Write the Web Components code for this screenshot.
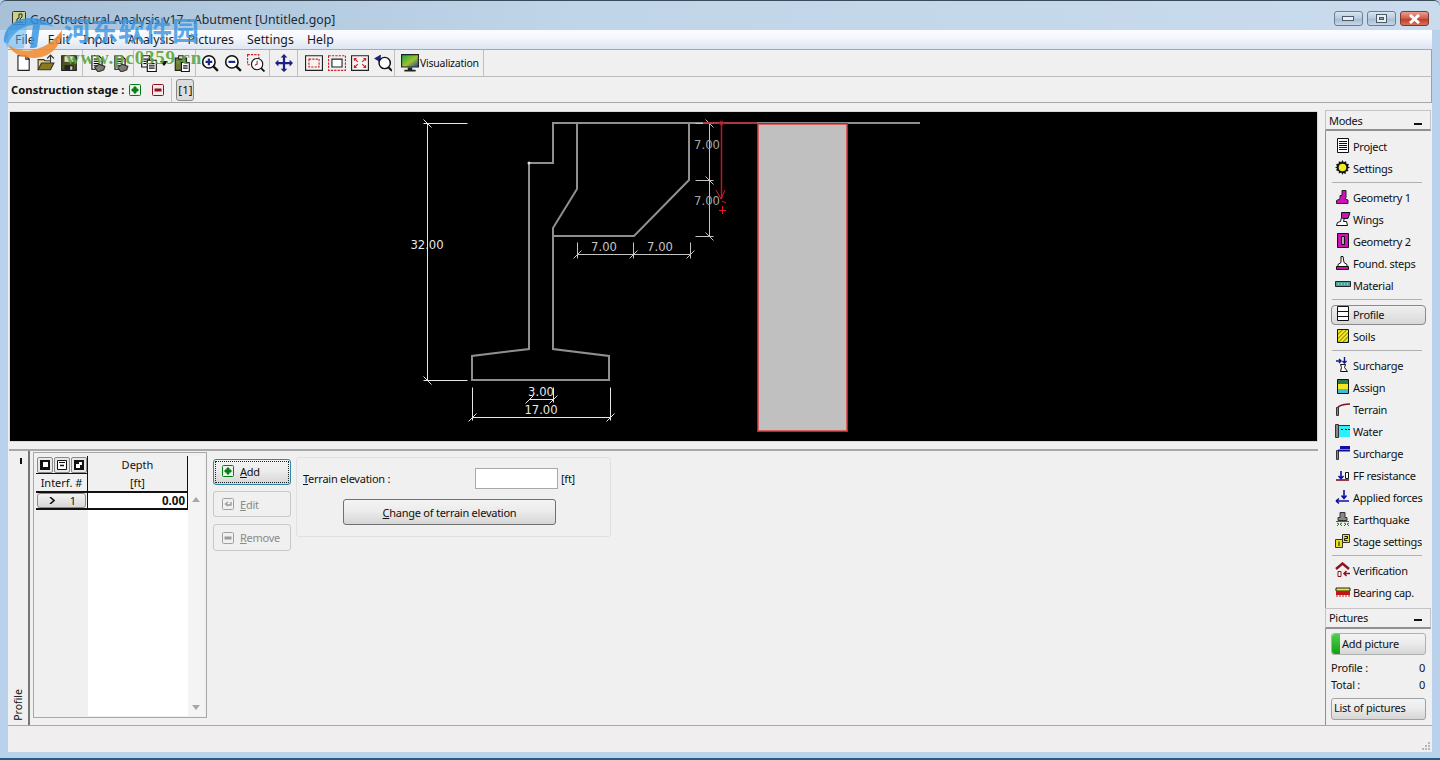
<!DOCTYPE html>
<html>
<head>
<meta charset="utf-8">
<title>GeoStructural Analysis v17 - Abutment</title>
<style>
html,body{margin:0;padding:0;height:760px;overflow:hidden;background:#b9d1ea;}
</style>
</head>
<body>
<geo-app></geo-app>
<script>
const FONT = '"Noto Sans","DejaVu Sans",sans-serif';

const doc = (x, y) => `<path d="M${x}.5 ${y}.5h6l3 3v9h-9z" fill="#fff" stroke="#000"/>`;
const lines = (x, y, n) => Array.from({length:n}, (_, i) => `<path d="M${x} ${y + i * 2}.5h5" stroke="#000" stroke-width="1"/>`).join('');

const ICONS = {
    // toolbar
    newfile:`<path d="M3.5 1.5h7l3 3v10h-10z" fill="#fff" stroke="#222"/><path d="M10.5 1.5v3h3" fill="none" stroke="#222"/>`,
    open:`<path d="M1 14V5h5l1 1h5v2" fill="#e5d47a" stroke="#333"/><path d="M1 14l3-6h11l-3 6z" fill="#8a7a1e" stroke="#333"/><path d="M9 4l3-3 3 3M12 1v5" fill="none" stroke="#333"/>`,
    save:`<path d="M1.5 1.5h13v13h-13z" fill="#4c5420" stroke="#222"/><path d="M4 2h8v5H4z" fill="#d9dcc5"/><path d="M4 10h8v4H4z" fill="#222"/><path d="M9 11h2v3H9z" fill="#ccc"/>`,
    docgear:`${doc(3,1)}${lines(5,4,4)}<path d="M6 12l4-3 5 2-1 3-5 2z" fill="#7a7f72" stroke="#333"/>`,
    copy:`<path d="M1.5 1.5h7v10h-7z" fill="#fff" stroke="#111"/>${lines(3,4,3)}<path d="M6.5 5.5h8v10h-8z" fill="#fff" stroke="#111"/><path d="M8 8.5h5M8 10.500h5M8 12.500h5" stroke="#111"/>`,
    paste:`<path d="M2 3.5h10v11H2z" fill="#6f7a32" stroke="#222"/><path d="M5 1.5h4v3H5z" fill="#ddd" stroke="#222"/><path d="M7.5 7.5h7v8h-7z" fill="#fff" stroke="#113"/><path d="M9 10.500h4M9 12.500h4" stroke="#113"/>`,
    zoomin:`<circle cx="7" cy="7" r="5.5" fill="#fff" stroke="#111" stroke-width="1.4"/><path d="M4 7h6M7 4v6" stroke="#1a2a8a" stroke-width="2"/><path d="M11 11l4 4" stroke="#111" stroke-width="2"/>`,
    zoomout:`<circle cx="7" cy="7" r="5.5" fill="#fff" stroke="#111" stroke-width="1.4"/><path d="M4 7h6" stroke="#1a2a8a" stroke-width="2"/><path d="M11 11l4 4" stroke="#111" stroke-width="2"/>`,
    zoomwin:`<path d="M.5 .5h10v9H.5z" fill="none" stroke="#c22" stroke-dasharray="2 1"/><circle cx="9" cy="9" r="5" fill="#fff" stroke="#111"/><path d="M9 6v3l-2 1" fill="none" stroke="#a33"/><path d="M12.5 12.5l3 3" stroke="#111" stroke-width="1.6"/>`,
    move:`<path d="M8 0l3 3H9v4h4V5l3 3-3 3V9H9v4h2l-3 3-3-3h2V9H3v2L0 8l3-3v2h4V3H5z" fill="#1c1f85"/>`,
    rectin:`<path d="M.5 1.5h15v13H.5z" fill="#f4f4f4" stroke="#222"/><path d="M3.5 4.5h9v7h-9z" fill="none" stroke="#c22" stroke-dasharray="2 1"/>`,
    rectout:`<path d="M.5 1.5h15v13H.5z" fill="none" stroke="#c22" stroke-dasharray="2 1"/><path d="M3.5 4.5h9v7h-9z" fill="#fff" stroke="#222"/>`,
    rectfit:`<path d="M.5 1.5h15v13H.5z" fill="#f4f4f4" stroke="#222"/><path d="M3 6V4h2M13 6V4h-2M3 10v2h2M13 10v2h-2M3 4l3 3M13 4l-3 3M3 12l3-3M13 12l-3-3" fill="none" stroke="#c22"/>`,
    zoomback:`<path d="M6 1L1 4l5 3V5" fill="#1c1f85" stroke="#1c1f85"/><circle cx="9.5" cy="8" r="5" fill="#fff" stroke="#111" stroke-width="1.3"/><path d="M13 12l3 3" stroke="#111" stroke-width="1.8"/>`,
    monitor:`<defs><linearGradient id="vg" x1="0" y1="0" x2="1" y2="1"><stop offset="0" stop-color="#12a24a"/><stop offset=".55" stop-color="#9ec22a"/><stop offset="1" stop-color="#1d3fb0"/></linearGradient></defs><path d="M.5 .5h15v11H.5z" fill="url(#vg)" stroke="#222"/><path d="M6 12h4v2H6zM3 14h10v1.500H3z" fill="#222"/>`,
    // stage bar
    plus:`<path d="M1.500 2.500q0-1 1-1h9q1 0 1 1v9q0 1-1 1h-9q-1 0-1-1z" fill="#e9f4e9" stroke="#0a7a16"/><path d="M4 6h2V4h2v2h2v2H8v2H6V8H4z" fill="#0a7a16" stroke="#0a7a16"/>`,
    minus:`<path d="M1.500 2.500q0-1 1-1h9q1 0 1 1v9q0 1-1 1h-9q-1 0-1-1z" fill="#f6e9e9" stroke="#8c1220"/><path d="M3.500 5.500h7v3h-7z" fill="#8c1220"/>`,
    // modes
    project:`<path d="M2.500 .500h11v14h-11z" fill="#fff" stroke="#111"/><path d="M4 3.500h8M4 5.500h8M4 7.500h8M4 9.500h8M4 11.500h8" stroke="#111"/>`,
    settings:`<path d="M7.500 0l1.200 2.200 2.400-.9.3 2.500 2.500.3-.9 2.400L15 7.500l-2.500 1.200.9 2.400-2.500.3-.3 2.500-2.400-.9L7.500 15l-1.200-2.500-2.400.9-.3-2.500-2.500-.3.9-2.400L0 7.500l2-1-.9-2.400 2.500-.3.3-2.500 2.400.9z" fill="#111"/><circle cx="7.500" cy="7.500" r="3.800" fill="#eeee22"/>`,
    geom1:`<path d="M1.500 14.500v-3l3.500-1.500V6.500h2V1.500h4v7l-1 1.500 3 1v3.500z" fill="#d010b8" stroke="#222"/>`,
    wings:`<path d="M1.500 14.500l1-3 3-1 1-4h3l-1 4h3l1 4z" fill="#fff" stroke="#111"/><path d="M6.500 1.500h8.500l-2 6H8l-1.500-1z" fill="#d010b8" stroke="#111"/>`,
    geom2:`<path d="M2.500 .500h11v14h-11z" fill="#d010b8" stroke="#111"/><path d="M6.500 3.500h3v8h-3z" fill="#aaa" stroke="#111"/>`,
    steps:`<path d="M6 1.500h2l1 6 3 2v2H3v-2l3-2z" fill="#fff" stroke="#111"/><path d="M1.500 11.500h12v3h-12z" fill="#d010b8" stroke="#111"/>`,
    material:`<path d="M.5 4.500h15v5H.5z" fill="#4aa7a0" stroke="#222"/><path d="M3 7h1M6 7h1M9 7h1M12 7h1" stroke="#d8f0ee"/>`,
    profile:`<path d="M2.500 .500h11v14h-11z" fill="#fff" stroke="#111"/><path d="M2.500 5.500h11M2.500 10.500h11" stroke="#111"/>`,
    soils:`<defs><pattern id="sp" width="3" height="3" patternUnits="userSpaceOnUse" patternTransform="rotate(45)"><rect width="3" height="3" fill="#f2e820"/><rect width="1" height="3" fill="#8a8a10"/></pattern></defs><path d="M2.500 1.500h11v13h-11z" fill="url(#sp)" stroke="#111"/>`,
    surcharge:`<path d="M5.500 7.500h5l-1 3 3 4h-7l1-4z" fill="#fff" stroke="#111"/><path d="M1 4h5M4 2l2 2-2 2M9.500 0v6M7.500 4l2 2 2-2" fill="none" stroke="#11188a" stroke-width="1.400"/>`,
    assign:`<path d="M2.500 .500h11v14h-11z" fill="#2a7a4a" stroke="#111"/><path d="M3 5h10v5H3z" fill="#f2e820"/><path d="M3 10h10v4H3z" fill="#3ac0d0"/>`,
    terrain:`<path d="M1.500 14.500v-8h2v8z" fill="#888" stroke="#333"/><path d="M3 6c3-2 5-3 12-3" fill="none" stroke="#7a1020" stroke-width="1.600"/>`,
    water:`<path d="M.5 1.500h3v13h-3z" fill="#888" stroke="#333"/><path d="M4 3h11v11H4z" fill="#2af0ff"/><path d="M4 2.500h11" stroke="#333"/><path d="M6 6.500h2M10 6.500h2M13 6.500h2" stroke="#111"/>`,
    surcharge2:`<path d="M1.500 14.500v-9h2v9z" fill="#888" stroke="#333"/><path d="M3 5.500h12" stroke="#1010a0" stroke-width="2"/><path d="M5 1h10v3H5z" fill="#1010a0"/>`,
    ff:`<path d="M1 13h13" stroke="#7a1020" stroke-width="1.600"/><path d="M10.500 5.500h3v6h-3z" fill="#fff" stroke="#111"/><path d="M6 4v7M3.500 9l2.500 2.500L8.500 9" fill="none" stroke="#1010a0" stroke-width="1.600"/>`,
    forces:`<path d="M9 1v8M6.500 6.500L9 9.500l2.500-3" fill="none" stroke="#1010a0" stroke-width="1.600"/><path d="M1 12h13M1 12l3-2.500M1 12l3 2.500" fill="none" stroke="#1010a0" stroke-width="1.600"/>`,
    quake:`<path d="M5 1.500h5v5h2v3H3v-3h2z" fill="#888" stroke="#333"/><path d="M1 10.500h13" stroke="#2a7a2a"/><path d="M2 12l2 1-2 2M7 12l-2 1 2 2M9 12l2 1-2 2M14 12l-2 1 2 2" fill="none" stroke="#2a7a2a"/>`,
    stage:`<path d="M.5 6.500h7v8h-7z" fill="#ece028" stroke="#333"/><path d="M7.500 1.500h7v8h-7z" fill="#ece028" stroke="#333"/><path d="M4 8.500v4.500M9.500 3.500h3v2h-3v2h3" fill="none" stroke="#111"/>`,
    verify:`<path d="M1 7l6.500-5.500L14 7" fill="none" stroke="#8c1220" stroke-width="2.400"/><path d="M3 9.500h3v5H3z" fill="#fff" stroke="#8c1220"/><path d="M15 11.500H9M11.500 9L9 11.500l2.500 2.500" fill="none" stroke="#8c1220" stroke-width="1.500"/>`,
    bearing:`<path d="M1 4h14v3H1z" fill="#f2e820" stroke="#222"/><path d="M1 7h14v4H1z" fill="#c01818"/><path d="M2 11v2M5 11v2M8 11v2M11 11v2M14 11v2" stroke="#c01818"/>`,
    // table
    tblsel:`<path d="M1 1h10v10H1z" fill="#111"/><path d="M4 3h5v5H4z" fill="#fff"/>`,
    tblmin:`<path d="M1.500 1.500h9v9h-9z" fill="#fff" stroke="#111"/><path d="M4 6.500h4" stroke="#111" stroke-width="1.500"/><path d="M3 3.500h6" stroke="#111"/>`,
    tblcopy:`<path d="M1 1h10v10H1z" fill="#111"/><path d="M3 5h4v4H3zM6 3h3v3H6z" fill="#fff"/>`,
    edit:`<path d="M1.500 2.500q0-1 1-1h9q1 0 1 1v9q0 1-1 1h-9q-1 0-1-1z" fill="#f0f0f0" stroke="#a0a0a0"/><path d="M10 5v3H6M7 5L4.500 7 7 9" fill="none" stroke="#9a9a9a" stroke-width="1.400"/>`,
    removeoff:`<path d="M1.500 2.500q0-1 1-1h9q1 0 1 1v9q0 1-1 1h-9q-1 0-1-1z" fill="#f0f0f0" stroke="#a0a0a0"/><path d="M3.500 5.500h7v3h-7z" fill="#9a9a9a"/>`
};

function svgIcon(name, w, h, vb){
    return `<svg xmlns="http://www.w3.org/2000/svg" width="${w}" height="${h}" viewBox="0 0 ${vb} ${vb}">${ICONS[name] || ''}</svg>`;
}

class GeoBase extends HTMLElement{
    constructor(){
        super();
        this.attachShadow({mode:'open'});
    }
    connectedCallback(){
        this.render();
    }
    getMarkup(){ return '<slot></slot>'; }
    getStyles(){ return ''; }
    render(){
        const template = document.createElement('template');
        template.innerHTML = `<style>${this.getStyles()}</style>${this.getMarkup()}`;
        this.shadowRoot.appendChild(template.content.cloneNode(true));
    }
}

class GeoWatermark extends GeoBase{
    getStyles(){ return `
        :host{position:absolute;left:0;top:0;width:220px;height:80px;pointer-events:none;z-index:5;}
        svg{position:absolute;left:0;top:0;}
        .cn{position:absolute;left:64px;top:10px;font:bold 27px "Noto Sans CJK SC",sans-serif;color:rgba(58,150,225,.82);white-space:nowrap;}
        .url{position:absolute;left:66px;top:47px;font:bold 19px "Liberation Serif",serif;color:rgba(90,165,60,.92);letter-spacing:.8px;white-space:nowrap;}
    `; }
    getMarkup(){ return `
        <svg width="70" height="80" viewBox="0 0 70 80">
            <path d="M4 42C3 28 15 18 30 18c10 0 18 3 24 9-4-2-10-2-14-2l-3 22c-2 1-4 1-7 1l3-23C23 26 13 32 8 44z" fill="rgba(58,150,225,.85)"/>
            <path d="M5 42c4-8 12-14 22-15l-3 21c-6 1-13 1-17-1z" fill="rgba(95,180,240,.55)"/>
            <path d="M8 44C16 52 30 52 40 48 50 44 56 38 62 30 62 44 52 58 34 58 22 58 12 54 8 44z" fill="rgba(240,140,50,.88)"/>
        </svg>
        <div class="cn">河东软件园</div>
        <div class="url">www.pc0359.cn</div>
    `; }
}

class GeoTitlebar extends GeoBase{
    getStyles(){ return `
        :host{display:flex;align-items:flex-start;height:30px;box-sizing:border-box;flex:none;padding:10px 11px 0 12px;
            background:linear-gradient(90deg,#a8c1d8,#c1d5e8 40%,#c9dbec);
            border-top:1px solid #3a4a58;border-radius:6px 6px 0 0;}
        .ico{width:14px;height:14px;margin-right:4px;flex:none;}
        .title{font:12.300px/17px ${FONT};color:#1b2a38;flex:1;white-space:nowrap;}
        .ctl{display:flex;gap:4px;}
        .b{width:29px;height:15px;box-sizing:border-box;border:1px solid #6b7f92;border-radius:3px;display:flex;align-items:center;justify-content:center;
            background:linear-gradient(#d9e5f0,#b6c9db 50%,#a3b9cd 51%,#c6d8e8);}
        .b.x{background:linear-gradient(#e8a090,#d15a45 50%,#b83a28 51%,#d87058);border-color:#7a3a30;}
    `; }
    getMarkup(){ return `
        <svg class="ico" viewBox="0 0 14 14"><rect x=".5" y=".5" width="13" height="13" rx="1" fill="#c9d08c" stroke="#333"/><path d="M3 11.500h8M5 11V8l2-1V3h3v3l-2 2v3" fill="none" stroke="#222"/></svg>
        <div class="title"><slot></slot></div>
        <div class="ctl">
            <div class="b"><svg width="14" height="7" viewBox="0 0 14 7"><rect x=".5" y="1.500" width="11" height="4" fill="#e8eef4" stroke="#4a5a68"/></svg></div>
            <div class="b"><svg width="12" height="10" viewBox="0 0 12 10"><rect x=".5" y=".5" width="10" height="8" fill="#e8eef4" stroke="#4a5a68"/><rect x="3.500" y="3.500" width="4" height="2" fill="#8aa" stroke="#4a5a68"/></svg></div>
            <div class="b x"><svg width="13" height="10" viewBox="0 0 13 10"><path d="M2 1l9 8M11 1L2 9" stroke="#fff" stroke-width="3"/></svg></div>
        </div>
    `; }
}

class GeoMenubar extends GeoBase{
    getStyles(){ return `
        :host{display:flex;height:20px;flex:none;box-sizing:border-box;padding-left:7px;
            background:linear-gradient(#fbfcfe,#f4f7fc 40%,#dde5f3);
            font:12.300px/19px ${FONT};color:#1a1a1a;border-bottom:1px solid #a8a8a8;}
        ::slotted(span){margin-right:13.200px;}
    `; }
}

class GeoToolBtn extends GeoBase{
    getStyles(){ return `
        :host{display:flex;width:23px;height:24px;align-items:center;justify-content:center;flex:none;}
    `; }
    getMarkup(){ return svgIcon(this.getAttribute('icon'), 18, 18, 16); }
}

class GeoToolbar extends GeoBase{
    getStyles(){ return `
        :host{display:flex;height:27px;flex:none;box-sizing:border-box;align-items:center;padding-left:3px;
            background:#f0f0f0;border-bottom:1px solid #bdbdbd;border-right:1px solid #a0a0a0;
            font:10.500px ${FONT};color:#111;}
        ::slotted(i){display:block;width:1px;height:26px;background:#c0c0c0;margin:0 2px;flex:none;}
        ::slotted(b){font:normal 10.500px ${FONT};letter-spacing:-.25px;}
    `; }
}

class GeoStagebar extends GeoBase{
    getStyles(){ return `
        :host{display:flex;height:26px;flex:none;box-sizing:border-box;align-items:center;padding:0 0 0 3px;
            background:#f0f0f0;border-bottom:1px solid #a8a8a8;border-right:1px solid #a0a0a0;
            font:bold 11.300px ${FONT};color:#111;}
        svg{flex:none;display:block;}
        .i1{margin-left:4px;}
        .i2{margin-left:9px;}
        .sep{width:1px;height:24px;background:#c4c4c4;margin:0 4px 0 6px;}
        .tab{width:18px;height:22px;box-sizing:border-box;border:1px solid #8a8a8a;border-radius:3px;background:#dcdcdc;display:flex;align-items:center;justify-content:center;font:11.500px ${FONT};}
    `; }
    getMarkup(){ return `
        <span><slot></slot></span>
        <span class="i1">${svgIcon('plus',14,14,14)}</span>
        <span class="i2">${svgIcon('minus',14,14,14)}</span>
        <div class="sep"></div>
        <div class="tab">[1]</div>
    `; }
}

class GeoCanvas extends GeoBase{
    getStyles(){ return `
        :host{display:block;height:331px;box-sizing:border-box;flex:none;background:#000;border:1px solid #d8d8d8;}
        svg{display:block;}
        text{font:11.600px "DejaVu Sans",sans-serif;text-anchor:middle;}
    `; }
    dim(x1, y1, x2, y2){
        return `<path d="M${x1}.5 ${y1}.5L${x2}.5 ${y2}.5"/>`;
    }
    // vertical dimension lines are ticked with a backslash, horizontal ones with a slash
    tickV(x, y){
        return `<path d="M${x - 4}.5 ${y - 4}.5L${x + 4}.5 ${y + 4}.5"/>`;
    }
    tickH(x, y){
        return `<path d="M${x - 4}.5 ${y + 4}.5L${x + 4}.5 ${y - 4}.5"/>`;
    }
    getMarkup(){
        const white = [
            this.dim(427,123,427,380), this.dim(423,123,467,123), this.dim(423,380,467,380),
            this.tickV(427,123), this.tickV(427,380),
            this.dim(472,387,472,420), this.dim(610,387,610,420), this.dim(472,417,610,417),
            this.tickH(472,417), this.tickH(610,417),
            this.dim(529,399,553,399), this.dim(553,387,553,402), this.tickH(529,399), this.tickH(553,399)
        ].join('');
        const light = [
            this.dim(709,123,709,236), this.dim(695,180,713,180), this.dim(695,236,713,236), this.dim(695,123,713,123),
            this.tickV(709,123), this.tickV(709,180), this.tickV(709,236),
            this.dim(577,254,690,254), this.dim(577,242,577,258), this.dim(633,242,633,258), this.dim(690,242,690,258),
            this.tickH(577,254), this.tickH(633,254), this.tickH(690,254)
        ].join('');
        return `
        <svg width="1308" height="329" viewBox="10 112 1308 329">
            <g fill="none" stroke="#8f8f8f" stroke-width="2">
                <path d="M529 163H553V123H920"/>
                <path d="M529 163V349L472 356V380H609V356L553 349V228L577 189V123"/>
                <path d="M553 236H634L689 180V123"/>
            </g>
            <circle cx="529" cy="163" r="1.500" fill="#ddd"/>
            <g stroke="#e6e6e6" stroke-width="1" fill="none">${white}</g>
            <g stroke="#c4c4c4" stroke-width="1" fill="none">${light}</g>
            <rect x="757" y="123" width="91" height="309" fill="#cc1a28"/>
            <rect x="758" y="124" width="89" height="307" fill="#d86060"/>
            <rect x="759" y="125" width="87" height="305" fill="#c0c0c0"/>
            <g fill="none" stroke="#b8182a">
                <path d="M703 123H757" stroke-width="1.500"/>
                <path d="M721.500 123V199" stroke-width="1.500"/>
                <circle cx="721.500" cy="123" r="2"/>
                <path d="M716 190L721 199L725 190M722 201L726 203M719 210.500H726M722.500 206V214" stroke="#e01828"/>
            </g>
            <g fill="#e8e8e8">
                <text x="427" y="249">32.00</text>
                <text x="541" y="396">3.00</text>
                <text x="541" y="414">17.00</text>
            </g>
            <g fill="#a8a8a8">
                <text x="707" y="149">7.00</text>
                <text x="707" y="205">7.00</text>
            </g>
            <g fill="#c8c8c8">
                <text x="604" y="251">7.00</text>
                <text x="660" y="251">7.00</text>
            </g>
        </svg>`;
    }
}

class GeoButton extends GeoBase{
    getStyles(){ return `
        :host{display:flex;align-items:center;box-sizing:border-box;flex:none;border:1px solid #a0a0a0;border-radius:3px;
            font:11px ${FONT};letter-spacing:-.25px;color:#111;white-space:nowrap;
            background:linear-gradient(#f4f4f4,#ececec 45%,#d6d6d6);}
        :host([primary]){border:1px solid #2c8aa8;outline:1px dotted #222;outline-offset:-3px;padding-bottom:2px;}
        :host([off]){background:#f0f0f0;color:#8a8a8a;border-color:#c8c8c8;}
        :host([center]){justify-content:center;}
        .ic{display:flex;margin:0 5px 0 7px;}
    `; }
    getMarkup(){
        const icon = this.getAttribute('icon');
        return (icon ? `<span class="ic">${svgIcon(icon,14,14,14)}</span>` : '') + '<slot></slot>';
    }
}

class GeoProfileTable extends GeoBase{
    getStyles(){ return `
        :host{display:flex;box-sizing:border-box;width:174px;height:266px;flex:none;border:1px solid #a8a8a8;padding:3px 2px 1px 2px;background:#f0f0f0;
            font:11px ${FONT};color:#111;}
        .col{display:flex;flex-direction:column;}
        .c1{width:52px;flex:none;box-sizing:border-box;}
        .c2{width:100px;flex:none;box-sizing:border-box;background:#fff;}
        .scroll{flex:1;background:#f4f4f4;display:flex;flex-direction:column;justify-content:space-between;align-items:center;padding:41px 0 6px;}
        .tools{height:18px;display:flex;align-items:center;gap:1px;padding-left:1px;border-bottom:1px solid #111;box-sizing:border-box;border-right:1px solid #111;background:#f0f0f0;}
        .tool{width:16px;height:16px;box-sizing:border-box;border:1px solid #8a8a8a;border-radius:2px;display:flex;align-items:center;justify-content:center;background:#e8e8e8;}
        .h2{height:19px;line-height:18px;text-align:center;border-bottom:2px solid #111;border-right:1px solid #111;background:#f0f0f0;box-sizing:border-box;}
        .h1{height:18px;line-height:18px;text-align:center;border-right:1px solid #111;background:#f0f0f0;box-sizing:border-box;}
        .rowh{height:17px;border-bottom:2px solid #111;border-right:1px solid #111;box-sizing:border-box;padding:0 1px;background:#f0f0f0;}
        .rowb{height:15px;box-sizing:border-box;border:1px solid #8a8a8a;border-radius:3px;background:linear-gradient(#f2f2f2,#d8d8d8);display:flex;align-items:center;justify-content:space-between;padding:0 9px 0 11px;}
        .val{height:17px;border-bottom:2px solid #111;border-right:1px solid #111;box-sizing:border-box;text-align:right;padding-right:2px;font:bold 11.500px/15px ${FONT};}
        .up{width:0;height:0;border:4px solid transparent;border-top:0;border-bottom:5px solid #a8a8a8;}
        .dn{width:0;height:0;border:4px solid transparent;border-bottom:0;border-top:5px solid #a8a8a8;}
    `; }
    getMarkup(){ return `
        <div class="col c1">
            <div class="tools">
                <span class="tool">${svgIcon('tblsel',12,12,12)}</span>
                <span class="tool">${svgIcon('tblmin',12,12,12)}</span>
                <span class="tool">${svgIcon('tblcopy',12,12,12)}</span>
            </div>
            <div class="h2">Interf. #</div>
            <div class="rowh"><div class="rowb"><svg width="6" height="7" viewBox="0 0 6 7"><path d="M1 0l4 3.500L1 7" fill="none" stroke="#111" stroke-width="1.600"/></svg><span>1</span></div></div>
        </div>
        <div class="col c2">
            <div class="h1">Depth</div>
            <div class="h2">[ft]</div>
            <div class="val">0.00</div>
        </div>
        <div class="scroll"><div class="up"></div><div class="dn"></div></div>
    `; }
}

class GeoTerrainBox extends GeoBase{
    getStyles(){ return `
        :host{display:block;box-sizing:border-box;width:315px;height:80px;flex:none;border:1px solid #e0e0e0;border-radius:3px;
            font:11px ${FONT};letter-spacing:-.25px;color:#111;padding:10px 6px 0 6px;}
        .row{display:flex;align-items:center;height:21px;}
        .lbl{width:172px;flex:none;}
        .in{width:83px;height:21px;box-sizing:border-box;background:#fff;border:1px solid #a8a8a8;flex:none;}
        .unit{margin-left:3px;}
        .btn{margin:10px 0 0 40px;}
        geo-button{width:213px;height:26px;border-color:#707070;}
    `; }
    getMarkup(){ return `
        <div class="row"><span class="lbl"><u>T</u>errain elevation :</span><span class="in"></span><span class="unit">[ft]</span></div>
        <div class="btn"><geo-button center><span><u>C</u>hange of terrain elevation</span></geo-button></div>
    `; }
}

class GeoInputPanel extends GeoBase{
    getStyles(){ return `
        :host{display:flex;height:276px;flex:none;box-sizing:border-box;border-top:2px solid #a8a8a8;}
        .tab{width:21px;flex:none;box-sizing:border-box;border-right:2px solid #777;display:flex;flex-direction:column;justify-content:space-between;align-items:center;}
        .pin{width:2px;height:6px;background:#111;margin:7px 0 0 5px;}
        .v{writing-mode:vertical-rl;transform:rotate(180deg);font:10.500px ${FONT};color:#111;margin:0 2px 4px 0;line-height:14px;}
        .body{display:flex;padding:1px 0 0 3px;}
        .btns{display:flex;flex-direction:column;gap:6px;margin:7px 0 0 6px;width:78px;}
        geo-button{width:78px;height:26px;}
        geo-terrain-box{margin:5px 0 0 5px;}
    `; }
    getMarkup(){ return `
        <div class="tab"><div class="pin"></div><div class="v">Profile</div></div>
        <div class="body">
            <geo-profile-table></geo-profile-table>
            <div class="btns">
                <geo-button primary icon="plus"><span><u>A</u>dd</span></geo-button>
                <geo-button off icon="edit"><span><u>E</u>dit</span></geo-button>
                <geo-button off icon="removeoff" style="height:27px;margin-top:1px"><span><u>R</u>emove</span></geo-button>
            </div>
            <geo-terrain-box></geo-terrain-box>
        </div>
    `; }
}

class GeoModeItem extends GeoBase{
    getStyles(){ return `
        :host{display:flex;align-items:center;height:22px;box-sizing:border-box;margin:0 5px;padding-left:4px;font:11px ${FONT};letter-spacing:-.3px;color:#111;white-space:nowrap;}
        :host([active]){border:1px solid #8a8a8a;border-radius:4px;height:20px;margin:5px 5px 0;padding:0 0 2px 3px;background:linear-gradient(#f0f0f0,#d8d8d8);}
        .ic{width:16px;height:16px;margin-right:2px;flex:none;display:flex;}
    `; }
    getMarkup(){ return `<span class="ic">${svgIcon(this.getAttribute('icon'),16,16,16)}</span><slot></slot>`; }
}

class GeoPaneHead extends GeoBase{
    getStyles(){ return `
        :host{display:flex;justify-content:space-between;align-items:center;height:21px;box-sizing:border-box;border:1px solid #c4c4c4;border-bottom:2px solid #909090;
            padding:1px 8px 0 3px;font:11px ${FONT};letter-spacing:-.3px;color:#111;background:#f0f0f0;}
        :host([flat]){padding:0 8px 2px 3px;}
        .dash{width:8px;height:2px;background:#111;margin-top:6px;}
    `; }
    getMarkup(){ return `<slot></slot><span class="dash"></span>`; }
}

class GeoSidebar extends GeoBase{
    getStyles(){ return `
        :host{display:flex;flex-direction:column;width:106px;flex:none;margin:7px 1px 0 0;font:11px ${FONT};color:#111;}
        .list{height:477px;box-sizing:border-box;border-left:1px solid #909090;padding-top:4px;flex:none;}
        ::slotted(hr){border:0;height:1px;background:#b0b0b0;margin:3px 9px 3px 6px;}
    `; }
    getMarkup(){ return `<geo-pane-head>Modes</geo-pane-head><div class="list"><slot></slot></div><slot name="pictures"></slot>`; }
}

class GeoPictures extends GeoBase{
    getStyles(){ return `
        :host{display:block;font:11px ${FONT};letter-spacing:-.25px;color:#111;}
        .body{border-left:1px solid #909090;padding:4px 5px 0 4px;height:96px;box-sizing:border-box;}
        .kv{display:flex;justify-content:space-between;height:17px;line-height:15px;padding:0 1px 0 1px;}
        geo-button{height:22px;width:95px;margin-left:1px;padding-bottom:2px;}
        .add{position:relative;padding-left:10px;margin-bottom:5px;border-color:#b0b0b0;}
        .bar{position:absolute;left:0;top:0;bottom:0;width:8px;background:linear-gradient(#4ed04e,#12a012);border-radius:3px 0 0 3px;}
        .list{margin-top:4px;padding-left:2px;padding-bottom:4px;}
        .k1{margin-top:4px;}
    `; }
    getMarkup(){ return `
        <geo-pane-head flat>Pictures</geo-pane-head>
        <div class="body">
            <geo-button class="add"><div class="bar"></div><span>Add picture</span></geo-button>
            <div class="kv k1"><span>Profile :</span><span>0</span></div>
            <div class="kv"><span>Total :</span><span>0</span></div>
            <geo-button class="list"><span>List of pictures</span></geo-button>
        </div>
    `; }
}

class GeoStatusbar extends GeoBase{
    getStyles(){ return `
        :host{display:block;height:27px;flex:none;box-sizing:border-box;border-top:1px solid #a8a8a8;background:#f0eeee;position:relative;}
        svg{position:absolute;right:1px;bottom:1px;}
    `; }
    getMarkup(){ return `<svg width="10" height="10" viewBox="0 0 10 10" fill="#b0b8c0"><rect x="7" y="1" width="2" height="2"/><rect x="4" y="4" width="2" height="2"/><rect x="7" y="4" width="2" height="2"/><rect x="1" y="7" width="2" height="2"/><rect x="4" y="7" width="2" height="2"/><rect x="7" y="7" width="2" height="2"/></svg>`; }
}

class GeoApp extends GeoBase{
    getStyles(){ return `
        :host{display:flex;flex-direction:column;width:1440px;height:760px;position:relative;overflow:hidden;background:#b9d1ea;}
        .inner{display:flex;flex-direction:column;flex:none;height:722px;margin:0 8px;background:#f0f0f0;}
        .main{display:flex;flex:none;height:622px;}
        .work{flex:1;min-width:0;display:flex;flex-direction:column;padding:8px 7px 0 1px;}
        .gap{height:7px;flex:none;}
        .edge{flex:1;border-bottom:2px solid #1d5f80;}
    `; }
    getMarkup(){ return `
        <geo-titlebar>GeoStructural Analysis v17 - Abutment [Untitled.gop]</geo-titlebar>
        <div class="inner">
            <geo-menubar><span>File</span><span>Edit</span><span>Input</span><span>Analysis</span><span>Pictures</span><span>Settings</span><span>Help</span></geo-menubar>
            <geo-toolbar>
                <geo-tool-btn icon="newfile"></geo-tool-btn><geo-tool-btn icon="open"></geo-tool-btn><geo-tool-btn icon="save"></geo-tool-btn><i></i>
                <geo-tool-btn icon="docgear"></geo-tool-btn><geo-tool-btn icon="docgear"></geo-tool-btn><i></i>
                <geo-tool-btn icon="copy" style="margin-left:1px"></geo-tool-btn><span style="width:0;height:0;border:4px solid transparent;border-top:5px solid #111;border-bottom:0;margin:0 2px 0 0"></span><geo-tool-btn icon="paste"></geo-tool-btn><i></i>
                <geo-tool-btn icon="zoomin"></geo-tool-btn><geo-tool-btn icon="zoomout"></geo-tool-btn><geo-tool-btn icon="zoomwin"></geo-tool-btn><i></i>
                <geo-tool-btn icon="move"></geo-tool-btn><i style="margin-right:4px"></i>
                <geo-tool-btn icon="rectin"></geo-tool-btn><geo-tool-btn icon="rectout"></geo-tool-btn><geo-tool-btn icon="rectfit"></geo-tool-btn><geo-tool-btn icon="zoomback"></geo-tool-btn><i style="margin-left:0;margin-right:3px"></i>
                <geo-tool-btn icon="monitor"></geo-tool-btn><b style="margin-left:-1px">Visualization</b><i style="margin-left:4px"></i>
            </geo-toolbar>
            <geo-stagebar>Construction stage :</geo-stagebar>
            <div class="main">
                <div class="work">
                    <geo-canvas></geo-canvas>
                    <div class="gap"></div>
                    <geo-input-panel></geo-input-panel>
                </div>
                <geo-sidebar>
                    <geo-mode-item icon="project">Project</geo-mode-item>
                    <geo-mode-item icon="settings">Settings</geo-mode-item>
                    <hr>
                    <geo-mode-item icon="geom1">Geometry 1</geo-mode-item>
                    <geo-mode-item icon="wings">Wings</geo-mode-item>
                    <geo-mode-item icon="geom2">Geometry 2</geo-mode-item>
                    <geo-mode-item icon="steps">Found. steps</geo-mode-item>
                    <geo-mode-item icon="material">Material</geo-mode-item>
                    <hr>
                    <geo-mode-item icon="profile" active>Profile</geo-mode-item>
                    <geo-mode-item icon="soils">Soils</geo-mode-item>
                    <hr>
                    <geo-mode-item icon="surcharge">Surcharge</geo-mode-item>
                    <geo-mode-item icon="assign">Assign</geo-mode-item>
                    <geo-mode-item icon="terrain">Terrain</geo-mode-item>
                    <geo-mode-item icon="water">Water</geo-mode-item>
                    <geo-mode-item icon="surcharge2">Surcharge</geo-mode-item>
                    <geo-mode-item icon="ff">FF resistance</geo-mode-item>
                    <geo-mode-item icon="forces">Applied forces</geo-mode-item>
                    <geo-mode-item icon="quake">Earthquake</geo-mode-item>
                    <geo-mode-item icon="stage">Stage settings</geo-mode-item>
                    <hr>
                    <geo-mode-item icon="verify">Verification</geo-mode-item>
                    <geo-mode-item icon="bearing">Bearing cap.</geo-mode-item>
                    <geo-pictures slot="pictures"></geo-pictures>
                </geo-sidebar>
            </div>
            <geo-statusbar></geo-statusbar>
        </div>
        <div class="edge"></div>
        <geo-watermark></geo-watermark>
    `; }
}

customElements.define('geo-watermark', GeoWatermark);
customElements.define('geo-titlebar', GeoTitlebar);
customElements.define('geo-menubar', GeoMenubar);
customElements.define('geo-tool-btn', GeoToolBtn);
customElements.define('geo-toolbar', GeoToolbar);
customElements.define('geo-stagebar', GeoStagebar);
customElements.define('geo-canvas', GeoCanvas);
customElements.define('geo-button', GeoButton);
customElements.define('geo-profile-table', GeoProfileTable);
customElements.define('geo-terrain-box', GeoTerrainBox);
customElements.define('geo-input-panel', GeoInputPanel);
customElements.define('geo-mode-item', GeoModeItem);
customElements.define('geo-pane-head', GeoPaneHead);
customElements.define('geo-pictures', GeoPictures);
customElements.define('geo-sidebar', GeoSidebar);
customElements.define('geo-statusbar', GeoStatusbar);
customElements.define('geo-app', GeoApp);
</script>
</body>
</html>
